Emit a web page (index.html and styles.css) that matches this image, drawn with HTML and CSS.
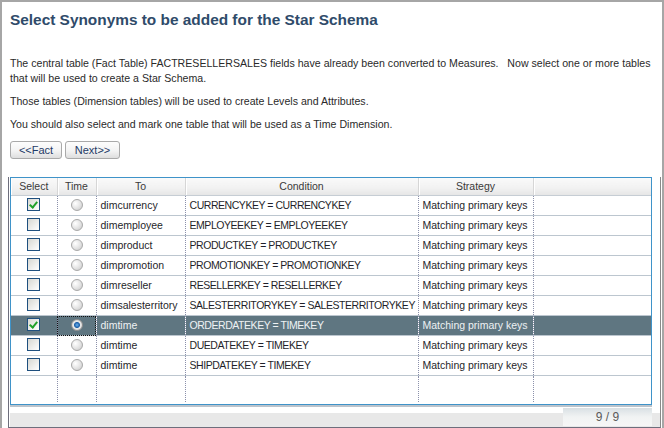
FILE: index.html
```html
<!DOCTYPE html>
<html>
<head>
<meta charset="utf-8">
<link rel="stylesheet" href="styles.css">
</head>
<body>
<div class="page">
  <h1 class="title">Select Synonyms to be added for the Star Schema</h1>
  <p class="txt">The central table (Fact Table) FACTRESELLERSALES fields have already been converted to Measures.&nbsp;&nbsp; Now select one or more tables<br>that will be used to create a Star Schema.</p>
  <p class="txt">Those tables (Dimension tables) will be used to create Levels and Attributes.</p>
  <p class="txt">You should also select and mark one table that will be used as a Time Dimension.</p>
  <div class="btns">
    <button class="btn btn-fact">&lt;&lt;Fact</button>
    <button class="btn btn-next">Next&gt;&gt;</button>
  </div>
  <div class="panel">
    <div class="grid-wrap">
      <table class="grid">
        <colgroup>
          <col class="c-sel"><col class="c-time"><col class="c-to"><col class="c-cond"><col class="c-strat"><col class="c-fill">
        </colgroup>
        <thead>
          <tr><th>Select</th><th>Time</th><th>To</th><th>Condition</th><th>Strategy</th><th class="last"></th></tr>
        </thead>
        <tbody>
          <tr><td class="ctr"><span class="cb checked"></span></td><td class="ctr"><span class="rd"></span></td><td>dimcurrency</td><td class="cond">CURRENCYKEY = CURRENCYKEY</td><td>Matching primary keys</td><td class="last"></td></tr>
          <tr><td class="ctr"><span class="cb"></span></td><td class="ctr"><span class="rd"></span></td><td>dimemployee</td><td class="cond">EMPLOYEEKEY = EMPLOYEEKEY</td><td>Matching primary keys</td><td class="last"></td></tr>
          <tr><td class="ctr"><span class="cb"></span></td><td class="ctr"><span class="rd"></span></td><td>dimproduct</td><td class="cond">PRODUCTKEY = PRODUCTKEY</td><td>Matching primary keys</td><td class="last"></td></tr>
          <tr><td class="ctr"><span class="cb"></span></td><td class="ctr"><span class="rd"></span></td><td>dimpromotion</td><td class="cond">PROMOTIONKEY = PROMOTIONKEY</td><td>Matching primary keys</td><td class="last"></td></tr>
          <tr><td class="ctr"><span class="cb"></span></td><td class="ctr"><span class="rd"></span></td><td>dimreseller</td><td class="cond">RESELLERKEY = RESELLERKEY</td><td>Matching primary keys</td><td class="last"></td></tr>
          <tr><td class="ctr"><span class="cb"></span></td><td class="ctr"><span class="rd"></span></td><td>dimsalesterritory</td><td class="cond">SALESTERRITORYKEY = SALESTERRITORYKEY</td><td>Matching primary keys</td><td class="last"></td></tr>
          <tr class="sel"><td class="ctr"><span class="cb checked"></span></td><td class="ctr focus"><span class="rd on"></span></td><td>dimtime</td><td class="cond">ORDERDATEKEY = TIMEKEY</td><td>Matching primary keys</td><td class="last"></td></tr>
          <tr><td class="ctr"><span class="cb"></span></td><td class="ctr"><span class="rd"></span></td><td>dimtime</td><td class="cond">DUEDATEKEY = TIMEKEY</td><td>Matching primary keys</td><td class="last"></td></tr>
          <tr><td class="ctr"><span class="cb"></span></td><td class="ctr"><span class="rd"></span></td><td>dimtime</td><td class="cond">SHIPDATEKEY = TIMEKEY</td><td>Matching primary keys</td><td class="last"></td></tr>
          <tr class="filler"><td></td><td></td><td></td><td></td><td></td><td class="last"></td></tr>
        </tbody>
      </table>
    </div>
    <div class="hline"></div>
    <div class="status"><span class="count">9 / 9</span></div>
  </div>
</div>
</body>
</html>
```

FILE: styles.css
```css
html, body {
  margin: 0;
  padding: 0;
  background: #ffffff;
}

.page {
  width: 664px;
  height: 428px;
  box-sizing: border-box;
  border: 2px solid #a6a6a6;
  border-bottom: 0;
  padding: 7px 0 0 8px;
  font-family: "Liberation Sans", Arial, sans-serif;
  font-size: 10.6px;
  color: #2a2a2a;
  overflow: hidden;
}

.title {
  margin: 0;
  font-size: 15.4px;
  line-height: 22px;
  font-weight: bold;
  color: #2f4b6a;
}

.txt {
  margin: 0 0 8px;
  line-height: 15px;
  white-space: nowrap;
}

.title + .txt {
  margin-top: 25px;
}

.btns {
  display: flex;
  gap: 3px;
  margin-top: 9px;
}

.btn {
  height: 18px;
  box-sizing: border-box;
  padding: 0;
  border: 1px solid #a9a9a9;
  border-radius: 3px;
  background: linear-gradient(#fdfdfd, #f3f3f3 55%, #dedede);
  font-family: "Liberation Sans", Arial, sans-serif;
  font-size: 11px;
  color: #1f3a66;
  line-height: 16px;
}

.btn-fact { width: 52px; }
.btn-next { width: 55px; }

.panel {
  margin-top: 18px;
  margin-left: -2px;
  width: 653px;
  box-sizing: border-box;
  padding-left: 1px;
  border-left: 1px solid #6e6e7c;
  border-right: 1px solid #8a8a8a;
  border-bottom: 1px solid #6e6e7c;
}

.grid-wrap {
  width: 642px;
  height: 228px;
  box-sizing: border-box;
  border: 1px solid #3f93c9;
  overflow: hidden;
}

.grid {
  width: 640px;
  border-collapse: collapse;
  table-layout: fixed;
  font-size: 10.5px;
}

.c-sel { width: 46px; }
.c-time { width: 39px; }
.c-to { width: 89px; }
.c-cond { width: 233px; }
.c-strat { width: 115px; }
.c-fill { width: 118px; }

.grid th {
  height: 17px;
  padding: 0;
  font-weight: normal;
  color: #3a3a3a;
  text-align: center;
  background: linear-gradient(#fafafa, #f1f1f1 60%, #e6e6e6);
  border-right: 1px solid #d6d6d6;
  border-bottom: 1px solid #c6cdd4;
  box-shadow: inset 1px 0 0 #ffffff;
  line-height: 17px;
}

.grid td {
  height: 19px;
  padding: 0 0 0 4px;
  border-right: 1px dotted #8b90aa;
  border-bottom: 1px solid #bcc6cf;
  white-space: nowrap;
  overflow: hidden;
  line-height: 19px;
  color: #1f1f2a;
}

.grid td.cond {
  letter-spacing: -0.45px;
}

.grid th.last,
.grid td.last {
  border-right: 0;
}

.grid td.ctr {
  padding: 0;
  text-align: center;
}

.grid tr.filler td {
  height: 26px;
  border-bottom: 0;
}

.grid tr.sel td {
  background: #5f7681;
  color: #eef2f4;
}

.grid td.focus {
  outline: 1px dotted #111111;
  outline-offset: -1px;
}

.cb {
  display: inline-block;
  width: 13px;
  height: 13px;
  box-sizing: border-box;
  border: 1px solid #1e4f7e;
  background: linear-gradient(135deg, #d8d8d2, #ffffff);
  vertical-align: middle;
  position: relative;
  top: -2px;
}

.cb.checked::after {
  content: "";
  position: absolute;
  left: 3px;
  top: 1px;
  width: 3px;
  height: 6px;
  border: solid #22a02a;
  border-width: 0 2px 2px 0;
  transform: rotate(40deg);
}

.rd {
  display: inline-block;
  width: 12px;
  height: 12px;
  box-sizing: border-box;
  border-radius: 50%;
  border: 1px solid #a9a9a9;
  background: radial-gradient(circle at 35% 35%, #ffffff, #e2e2e2 55%, #c4c4c4);
  vertical-align: middle;
  position: relative;
  top: -1px;
}

.rd.on {
  background: radial-gradient(circle, #6db2ee 0, #1d5fa8 2.5px, #e8e8e8 3.5px, #c8c8c8);
  border-color: #8b8b8b;
}

.hline {
  height: 2px;
  background: #bcc4cc;
  margin-right: 8px;
}

.status {
  height: 20px;
  display: flex;
  justify-content: flex-end;
  background: linear-gradient(#ffffff 0, #ffffff 6px, #e8e8e8 6px);
  padding-right: 8px;
}

.count {
  width: 89px;
  height: 18px;
  margin-top: 1px;
  background: linear-gradient(#d9e0e4, #f1f3f3 50%, #f6f6f6);
  color: #5a5a5a;
  font-size: 12px;
  line-height: 18px;
  text-align: center;
}
```
